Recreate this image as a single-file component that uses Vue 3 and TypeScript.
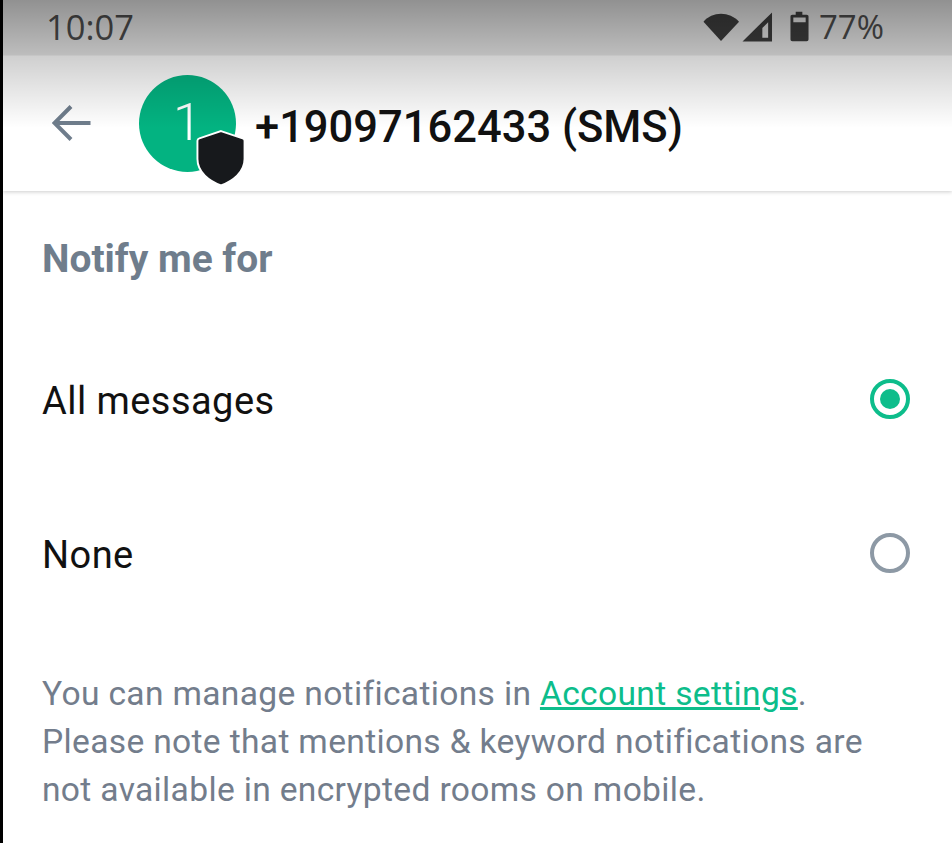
<template>
	<div class="screen">
		<div class="strip"></div>
		<div class="main">
			<header class="header">
				<div class="shade"></div>
				<div class="statusbar">
					<span class="time">10:07</span>
					<div class="status-icons">
						<svg class="wifi" width="37" height="30" viewBox="0 0 38 30">
							<path d="M0.500 9.500C5 4.500 11.500 1.500 18.500 1.500C25.500 1.500 32 4.500 37 9.500L18.500 29.500Z" fill="#444" />
						</svg>
						<svg class="signal" width="31" height="30" viewBox="0 0 32 31">
							<path fill-rule="evenodd" d="M0.500 30.500L31 0.500V30.500ZM21 26.500H27V10.500L21 16.500Z" fill="#444" />
						</svg>
						<svg class="battery" width="19" height="31" viewBox="0 0 20 32">
							<path fill-rule="evenodd" d="M6 0.500H13V3.500H17.500C18.800 3.500 19.500 4.300 19.500 5.500V29.500C19.500 30.700 18.800 31.500 17.500 31.500H2.500C1.200 31.500 0.500 30.700 0.500 29.500V5.500C0.500 4.300 1.200 3.500 2.500 3.500H6ZM3.500 6.500V11.500H16.500V6.500Z" fill="#444" />
						</svg>
						<span class="percent">77%</span>
					</div>
				</div>
				<div class="toolbar">
					<svg class="back" width="40" height="38" viewBox="0 0 40 38">
						<path d="M38.500 19H3M19 2.500L2.500 19L19 35.500" fill="none" stroke="#6f7d8c" stroke-width="4" />
					</svg>
					<div class="avatar-wrap">
						<div class="avatar">1</div>
						<svg class="shield" width="50" height="58" viewBox="0 0 52 60">
							<path d="M26 2L48.500 9.500C50 10 50.500 11 50.500 12V31C50.500 45 38 54 26 58.500C14 54 1.500 45 1.500 31V12C1.500 11 2 10 3.500 9.500Z" fill="#17191c" stroke="#fff" stroke-width="2" />
						</svg>
					</div>
					<span class="title">+19097162433 (SMS)</span>
				</div>
			</header>

			<section class="content">
				<h2 class="section-title">Notify me for</h2>
				<div v-for="opt in options" :key="opt.label" class="option">
					<span class="option-label">{{ opt.label }}</span>
					<span class="radio" :class="{ checked: opt.checked }"></span>
				</div>
				<p class="note">
					You can manage notifications in <a class="link">Account settings</a>.<br />
					Please note that mentions &amp; keyword notifications are<br />
					not available in encrypted rooms on mobile.
				</p>
			</section>
		</div>
	</div>
</template>

<script setup lang="ts">
type Option = {
	label: string
	checked: boolean
}

const options: Option[] = [
	{ label: 'All messages', checked: true },
	{ label: 'None', checked: false },
]
</script>

<style>
html,
body {
	margin: 0;
	background: #fff;
}
</style>

<style scoped>
.screen {
	display: flex;
	width: 952px;
	height: 843px;
	overflow: hidden;
	font-family: Roboto, 'Liberation Sans', sans-serif;
	background: #fff;
}

.strip {
	width: 3px;
	flex: none;
	background: #000;
}

.main {
	flex: 1;
	min-width: 0;
}

.header {
	position: relative;
	height: 191px;
	background: #fff;
	box-shadow: 0 1px 4px rgba(0, 0, 0, 0.2);
}

.shade {
	position: absolute;
	top: 0;
	left: 0;
	right: 0;
	height: 128px;
	z-index: 3;
	pointer-events: none;
	background: linear-gradient(
		to bottom,
		rgba(0, 0, 0, 0.43) 0,
		rgba(0, 0, 0, 0.26) 55px,
		rgba(0, 0, 0, 0.19) 56px,
		rgba(0, 0, 0, 0) 128px
	);
}

.statusbar {
	display: flex;
	justify-content: space-between;
	align-items: center;
	box-sizing: border-box;
	height: 55px;
	padding: 0 68px 2px 43px;
	color: #555;
}

.time {
	font-family: 'Open Sans', Roboto, sans-serif;
	font-size: 34.500px;
}

.status-icons {
	display: flex;
	align-items: center;
}

.wifi {
	margin-right: 2px;
}

.signal {
	margin-right: 17px;
}

.battery {
	margin-right: 10px;
}

.percent {
	font-family: 'Open Sans', Roboto, sans-serif;
	font-size: 33px;
}

.toolbar {
	display: flex;
	align-items: center;
	height: 136px;
	padding-left: 49px;
}

.back {
	flex: none;
	margin-right: 47px;
}

.avatar-wrap {
	position: relative;
	flex: none;
	width: 97px;
	height: 97px;
	margin-right: 19px;
}

.avatar {
	display: flex;
	align-items: center;
	justify-content: center;
	width: 97px;
	height: 97px;
	border-radius: 50%;
	background: #03b381;
	color: #fff;
	font-size: 52px;
	font-weight: 300;
	line-height: 1;
}

.shield {
	position: absolute;
	left: 57px;
	top: 54px;
}

.title {
	margin-top: 9px;
	font-size: 43.500px;
	font-weight: 500;
	color: #111;
	white-space: nowrap;
}

.content {
	padding: 0 42px 0 39px;
}

.section-title {
	margin: 45px 0 0;
	font-size: 38.900px;
	font-weight: 700;
	line-height: 46px;
	color: #6f7d8c;
}

.option {
	display: flex;
	justify-content: space-between;
	align-items: center;
	height: 154px;
	font-size: 38px;
	color: #111;
	letter-spacing: 0.45px;
}

.option:first-of-type {
	margin-top: 40px;
}

.option-label {
	margin-top: 3px;
}

.radio {
	box-sizing: border-box;
	width: 40px;
	height: 40px;
	border: 4px solid #8d99a5;
	border-radius: 50%;
}

.radio.checked {
	position: relative;
	border-color: #0dbd8b;
}

.radio.checked::after {
	content: '';
	position: absolute;
	left: 6px;
	top: 6px;
	width: 20px;
	height: 20px;
	border-radius: 50%;
	background: #0dbd8b;
}

.note {
	margin: 40px 0 0;
	font-size: 33.600px;
	line-height: 48px;
	color: #737d8c;
	letter-spacing: 0.33px;
	white-space: nowrap;
}

.link {
	color: #0dbd8b;
	text-decoration: underline;
}
</style>
